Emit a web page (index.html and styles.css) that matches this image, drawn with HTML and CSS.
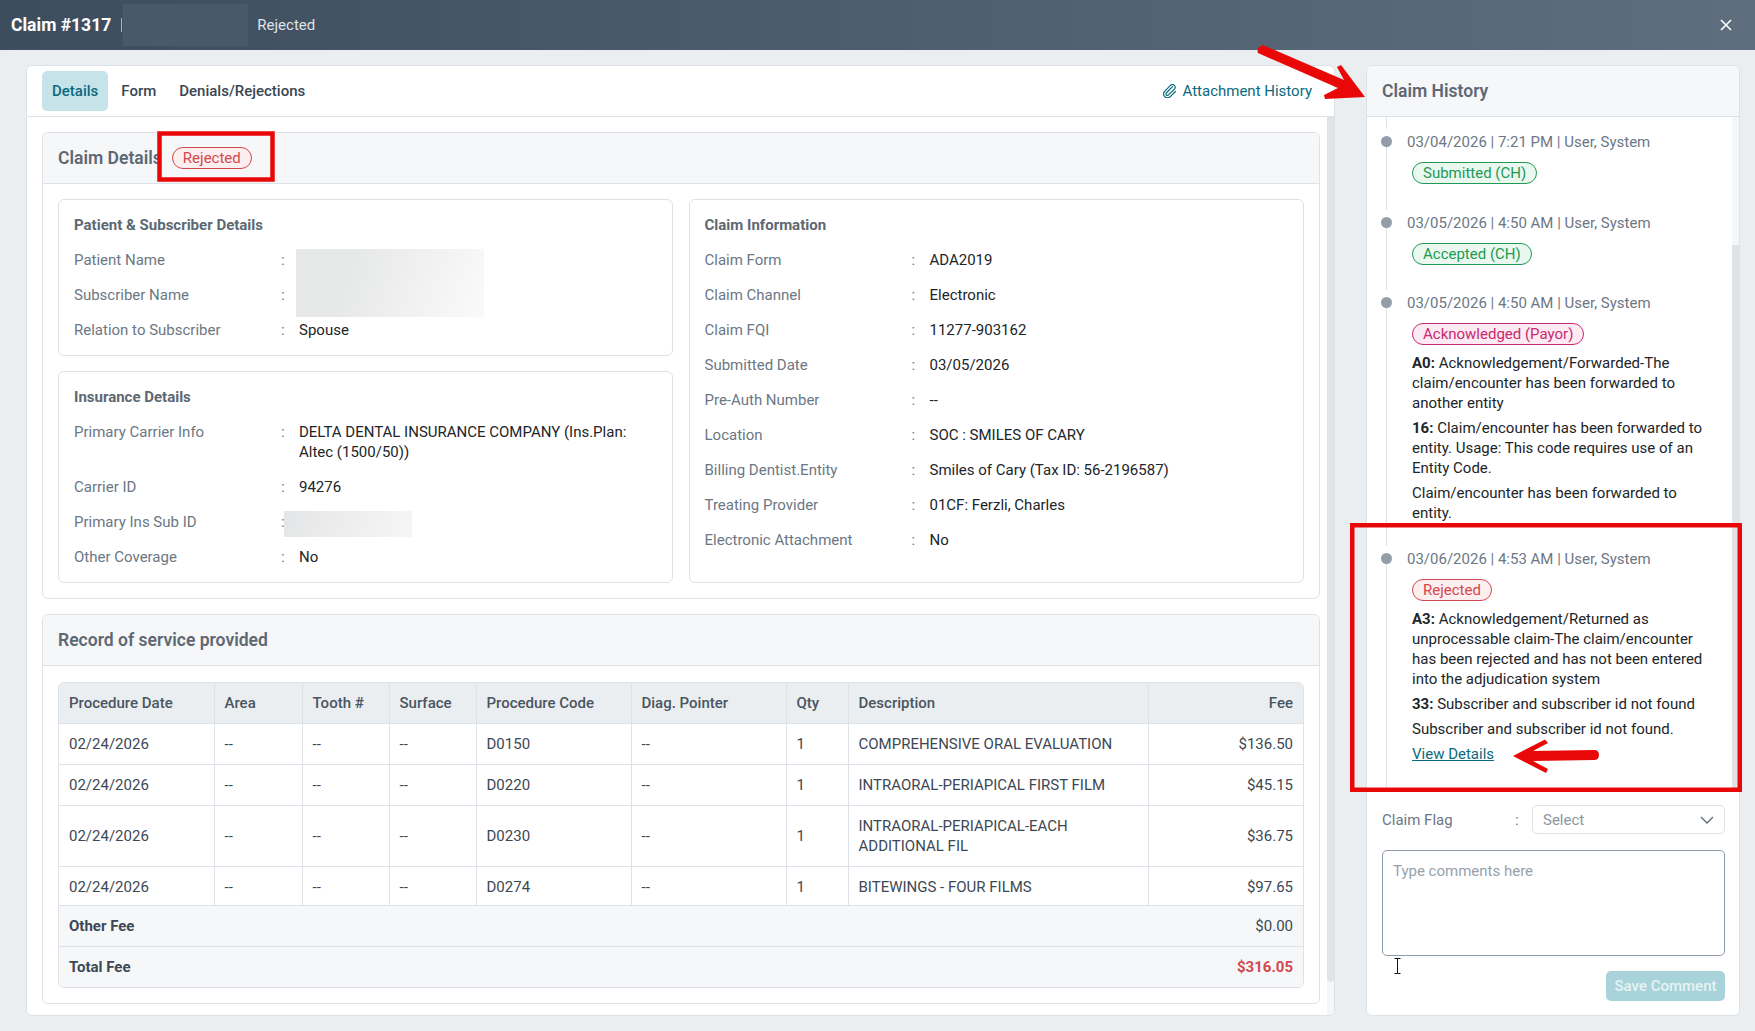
FILE: index.html
```html
<!DOCTYPE html>
<html lang="en">

<head>
  <meta charset="UTF-8">
  <meta name="viewport" content="width=device-width, initial-scale=1.0">
  <title>Claim #1317</title>
  <link rel="stylesheet" href="styles.css">
</head>

<body>
  <header class="topbar">
    <span class="topbar-title">Claim #1317</span>
    <span class="topbar-sep"></span>
    <span class="topbar-blur"></span>
    <span class="topbar-status">Rejected</span>
    <svg class="topbar-close" width="12" height="12" viewBox="0 0 12 12">
      <path d="M1 1L11 11M11 1L1 11" stroke="#fff" stroke-width="1.6" fill="none" />
    </svg>
  </header>

  <main class="layout">
    <section class="panel">
      <div class="tabs">
        <a class="tab tab-active">Details</a>
        <a class="tab">Form</a>
        <a class="tab">Denials/Rejections</a>
        <a class="attach-link">
          <svg width="14" height="14" viewBox="0 0 14 14">
            <path d="M9.6 2.6L3.2 9a1.5 1.5 0 0 0 2.1 2.1L11.5 5a2.7 2.7 0 0 0-3.8-3.8L1.6 7.3a3.9 3.9 0 0 0 5.500 5.500l5.300-5.300" stroke="#0b6a7e" stroke-width="1.2" fill="none" stroke-linecap="round" />
          </svg>
          Attachment History
        </a>
      </div>

      <div class="panel-body">
        <div class="panel-content">
          <div class="card">
            <div class="card-head">Claim Details <span class="badge badge-red">Rejected</span></div>
            <div class="card-body details-grid">
              <div class="details-col">
                <div class="box">
                  <div class="box-title">Patient &amp; Subscriber Details</div>
                  <div class="kv"><span class="kv-label">Patient Name</span><span class="kv-colon">:</span><span class="kv-val"></span><span class="blur blur-name"></span></div>
                  <div class="kv"><span class="kv-label">Subscriber Name</span><span class="kv-colon">:</span><span class="kv-val"></span></div>
                  <div class="kv"><span class="kv-label">Relation to Subscriber</span><span class="kv-colon">:</span><span class="kv-val">Spouse</span></div>
                </div>
                <div class="box">
                  <div class="box-title">Insurance Details</div>
                  <div class="kv"><span class="kv-label">Primary Carrier Info</span><span class="kv-colon">:</span><span class="kv-val">DELTA DENTAL INSURANCE COMPANY (Ins.Plan: Altec (1500/50))</span></div>
                  <div class="kv"><span class="kv-label">Carrier ID</span><span class="kv-colon">:</span><span class="kv-val">94276</span></div>
                  <div class="kv"><span class="kv-label">Primary Ins Sub ID</span><span class="kv-colon">:</span><span class="kv-val"></span><span class="blur blur-id"></span></div>
                  <div class="kv"><span class="kv-label">Other Coverage</span><span class="kv-colon">:</span><span class="kv-val">No</span></div>
                </div>
              </div>
              <div class="box">
                <div class="box-title">Claim Information</div>
                <div class="kv"><span class="kv-label">Claim Form</span><span class="kv-colon">:</span><span class="kv-val">ADA2019</span></div>
                <div class="kv"><span class="kv-label">Claim Channel</span><span class="kv-colon">:</span><span class="kv-val">Electronic</span></div>
                <div class="kv"><span class="kv-label">Claim FQI</span><span class="kv-colon">:</span><span class="kv-val">11277-903162</span></div>
                <div class="kv"><span class="kv-label">Submitted Date</span><span class="kv-colon">:</span><span class="kv-val">03/05/2026</span></div>
                <div class="kv"><span class="kv-label">Pre-Auth Number</span><span class="kv-colon">:</span><span class="kv-val">--</span></div>
                <div class="kv"><span class="kv-label">Location</span><span class="kv-colon">:</span><span class="kv-val">SOC : SMILES OF CARY</span></div>
                <div class="kv"><span class="kv-label">Billing Dentist.Entity</span><span class="kv-colon">:</span><span class="kv-val">Smiles of Cary (Tax ID: 56-2196587)</span></div>
                <div class="kv"><span class="kv-label">Treating Provider</span><span class="kv-colon">:</span><span class="kv-val">01CF: Ferzli, Charles</span></div>
                <div class="kv"><span class="kv-label">Electronic Attachment</span><span class="kv-colon">:</span><span class="kv-val">No</span></div>
              </div>
            </div>
          </div>

          <div class="card">
            <div class="card-head">Record of service provided</div>
            <div class="card-body card-body-table">
              <div class="table-wrap">
                <table class="svc">
                  <colgroup>
                    <col class="c-date">
                    <col class="c-area">
                    <col class="c-tooth">
                    <col class="c-surface">
                    <col class="c-code">
                    <col class="c-diag">
                    <col class="c-qty">
                    <col class="c-desc">
                    <col class="c-fee">
                  </colgroup>
                  <thead>
                    <tr>
                      <th>Procedure Date</th>
                      <th>Area</th>
                      <th>Tooth #</th>
                      <th>Surface</th>
                      <th>Procedure Code</th>
                      <th>Diag. Pointer</th>
                      <th>Qty</th>
                      <th>Description</th>
                      <th class="num">Fee</th>
                    </tr>
                  </thead>
                  <tbody>
                    <tr class="r41">
                      <td>02/24/2026</td><td>--</td><td>--</td><td>--</td><td>D0150</td><td>--</td><td>1</td>
                      <td>COMPREHENSIVE ORAL EVALUATION</td><td class="num">$136.50</td>
                    </tr>
                    <tr class="r41">
                      <td>02/24/2026</td><td>--</td><td>--</td><td>--</td><td>D0220</td><td>--</td><td>1</td>
                      <td>INTRAORAL-PERIAPICAL FIRST FILM</td><td class="num">$45.15</td>
                    </tr>
                    <tr class="r61">
                      <td>02/24/2026</td><td>--</td><td>--</td><td>--</td><td>D0230</td><td>--</td><td>1</td>
                      <td>INTRAORAL-PERIAPICAL-EACH ADDITIONAL FIL</td><td class="num">$36.75</td>
                    </tr>
                    <tr class="r39">
                      <td>02/24/2026</td><td>--</td><td>--</td><td>--</td><td>D0274</td><td>--</td><td>1</td>
                      <td>BITEWINGS - FOUR FILMS</td><td class="num">$97.65</td>
                    </tr>
                    <tr class="r41 total">
                      <td colspan="8"><b>Other Fee</b></td><td class="num">$0.00</td>
                    </tr>
                    <tr class="r41 total">
                      <td colspan="8"><b>Total Fee</b></td><td class="num fee-red">$316.05</td>
                    </tr>
                  </tbody>
                </table>
              </div>
            </div>
          </div>
        </div>
        <div class="scroll-track"><div class="scroll-thumb thumb-main"></div></div>
      </div>
    </section>

    <aside class="panel">
      <div class="history-head">Claim History</div>
      <div class="history-scroll">
        <div class="timeline">
          <div class="tl-item">
            <div class="tl-date">03/04/2026 | 7:21 PM | User, System</div>
            <div class="tl-body"><span class="badge badge-green">Submitted (CH)</span></div>
          </div>
          <div class="tl-item">
            <div class="tl-date">03/05/2026 | 4:50 AM | User, System</div>
            <div class="tl-body"><span class="badge badge-green">Accepted (CH)</span></div>
          </div>
          <div class="tl-item tl-long">
            <div class="tl-date">03/05/2026 | 4:50 AM | User, System</div>
            <div class="tl-body">
              <span class="badge badge-pink">Acknowledged (Payor)</span>
              <p><b>A0:</b> Acknowledgement/Forwarded-The claim/encounter has been forwarded to another entity</p>
              <p><b>16:</b> Claim/encounter has been forwarded to entity. Usage: This code requires use of an Entity Code.</p>
              <p>Claim/encounter has been forwarded to entity.</p>
            </div>
          </div>
          <div class="tl-item tl-long">
            <div class="tl-date">03/06/2026 | 4:53 AM | User, System</div>
            <div class="tl-body">
              <span class="badge badge-red">Rejected</span>
              <p><b>A3:</b> Acknowledgement/Returned as unprocessable claim-The claim/encounter has been rejected and has not been entered into the adjudication system</p>
              <p><b>33:</b> Subscriber and subscriber id not found</p>
              <p>Subscriber and subscriber id not found.</p>
              <p><a class="view-link">View Details</a></p>
            </div>
          </div>
        </div>
        <div class="scroll-track"><div class="scroll-thumb thumb-history"></div></div>
      </div>

      <div class="comment-form">
        <div class="flag-row">
          <span class="kv-label">Claim Flag</span>
          <span class="kv-colon">:</span>
          <div class="select">
            Select
            <svg width="14" height="8" viewBox="0 0 14 8">
              <path d="M1 1l6 6 6-6" stroke="#5d6873" stroke-width="1.3" fill="none" />
            </svg>
          </div>
        </div>
        <textarea class="comment-box" placeholder="Type comments here"></textarea>
        <div class="form-actions"><button class="btn-save">Save Comment</button></div>
      </div>
    </aside>
  </main>

  <!-- red marks drawn on top of the screenshot, plus the text cursor -->
  <svg class="marks" width="1755" height="1031" viewBox="0 0 1755 1031">
    <rect x="159.500" y="133.500" width="113" height="46" fill="none" stroke="#e90808" stroke-width="4.500" />
    <rect x="1352.250" y="525.250" width="387.500" height="264.500" fill="none" stroke="#e90808" stroke-width="4.500" />
    <path d="M1263 45L1344 80L1337 67L1341 65L1365 97L1325 99L1324 95L1338 88L1258 53Q1256 47 1263 45Z" fill="#e90808" />
    <path d="M1513 756L1545 739.500L1548 743L1533 751L1594 750Q1599 750 1599 755Q1599 760 1594 760L1533 761L1548 769L1546 773Z" fill="#e90808" />
    <path d="M1394.500 958.500H1397.500V973.500H1394.500M1400.500 958.500H1397.500M1400.500 973.500H1397.500" stroke="#111" stroke-width="1" fill="none" />
  </svg>
</body>

</html>
```

FILE: styles.css
```css
* {
  box-sizing: border-box;
}

html,
body {
  margin: 0;
  height: 1031px;
  overflow: hidden;
}

body {
  position: relative;
  background: #ebeef1;
  color: #212529;
  font-family: Roboto, "Liberation Sans", sans-serif;
  font-size: 15px;
  line-height: 20px;
}

.topbar {
  display: flex;
  align-items: center;
  height: 50px;
  padding: 0 23px 0 11px;
  color: #fff;
  background: linear-gradient(90deg, #3d4d5e, #5f6e7e);
}

.topbar-title {
  font-size: 17.550px;
  font-weight: 700;
}

.topbar-sep {
  width: 1px;
  height: 14px;
  margin: 0 1px 0 10px;
  background: #aab3bc;
}

.topbar-blur {
  width: 125px;
  height: 42px;
  background: #48596a;
}

.topbar-status {
  margin-left: 9px;
  color: #dfe3e7;
}

.topbar-close {
  margin-left: auto;
}

.layout {
  display: grid;
  grid-template-columns: 1309px 374px;
  gap: 31px;
  height: 981px;
  margin: 15px 15px 0 26px;
}

.panel {
  display: flex;
  flex-direction: column;
  height: 951px;
  overflow: hidden;
  background: #fff;
  border: 1px solid #dde1e8;
  border-radius: 6px;
}

.tabs {
  display: flex;
  align-items: center;
  flex-shrink: 0;
  height: 51px;
  padding: 0 22px 0 15px;
  border-bottom: 1px solid #dde1e8;
}

.tab {
  display: flex;
  align-items: center;
  height: 40px;
  margin-right: 3px;
  padding: 0 10px;
  color: #3a4653;
  font-weight: 500;
  border-radius: 5px;
}

.tab-active {
  color: #0b6a7e;
  background: #c5e3e8;
}

.attach-link {
  display: flex;
  align-items: center;
  gap: 6px;
  margin-left: auto;
  color: #0b6a7e;
}

.panel-body {
  display: flex;
  flex: 1;
  min-height: 0;
}

.panel-content {
  display: flex;
  flex: 1;
  flex-direction: column;
  gap: 15px;
  padding: 15px 7px 0 15px;
}

.scroll-track {
  flex-shrink: 0;
  width: 7px;
  background: #f5f6f8;
}

.scroll-thumb {
  width: 7px;
  background: #e0e4e7;
  border-radius: 0 0 4px 4px;
}

.thumb-main {
  height: 865px;
}

.thumb-history {
  height: 547px;
  margin-top: 128px;
}

.card {
  border: 1px solid #dde1e8;
  border-radius: 6px;
}

.card-head {
  display: flex;
  align-items: center;
  gap: 10px;
  height: 51px;
  padding: 0 15px;
  color: #5d6873;
  font-size: 17.550px;
  font-weight: 600;
  background: #f6f7f9;
  border-bottom: 1px solid #dde1e8;
  border-radius: 6px 6px 0 0;
}

.card-body {
  padding: 15px;
}

.card-body-table {
  padding-top: 16px;
}

.details-grid {
  display: grid;
  grid-template-columns: 615px 615.500px;
  gap: 15.500px;
}

.details-col {
  display: flex;
  flex-direction: column;
  gap: 15px;
}

.box {
  padding: 15px 15px 8px;
  border: 1px solid #dde1e8;
  border-radius: 6px;
}

.box-title {
  margin-bottom: 7px;
  color: #5d6873;
  font-weight: 700;
}

.kv {
  position: relative;
  display: grid;
  grid-template-columns: 207px 18px 1fr;
  padding: 7.500px 0;
}

.kv-label {
  color: #6c7784;
}

.kv-colon {
  color: #6c7784;
}

.blur {
  position: absolute;
  top: 7px;
}

.blur-name {
  left: 222px;
  width: 188px;
  height: 68px;
  background: linear-gradient(110deg, #e7e8e8 30%, #f9f9f9 95%);
}

.blur-id {
  left: 210px;
  width: 128px;
  height: 26px;
  background: linear-gradient(110deg, #e4e5e6, #f6f6f6);
}

.badge {
  display: flex;
  align-items: center;
  width: fit-content;
  height: 22px;
  padding: 0 10px;
  font-size: 15px;
  font-weight: 400;
  border: 1px solid;
  border-radius: 11px;
}

.badge-red {
  color: #d2484f;
  background: #fdeeef;
  border-color: #d2484f;
}

.badge-green {
  color: #1f9a54;
  background: #eaf8f0;
  border-color: #1f9a54;
}

.badge-pink {
  color: #c9296f;
  background: #fdeaf3;
  border-color: #c9296f;
}

.table-wrap {
  overflow: hidden;
  border: 1px solid #dde1e8;
  border-radius: 6px;
}

.svc {
  width: 100%;
  table-layout: fixed;
  border-collapse: collapse;
  color: #3d4854;
}

.c-date { width: 155px; }
.c-area { width: 88px; }
.c-tooth { width: 87px; }
.c-surface { width: 87px; }
.c-code { width: 155px; }
.c-diag { width: 155px; }
.c-qty { width: 62px; }
.c-desc { width: 300px; }
.c-fee { width: 155px; }

.svc th,
.svc td {
  padding: 0 10px;
  text-align: left;
  border-right: 1px solid #dde1e8;
  border-bottom: 1px solid #dde1e8;
}

.svc th:last-child,
.svc td:last-child {
  border-right: none;
}

.svc tr:last-child td {
  border-bottom: none;
}

.svc th {
  height: 40px;
  color: #4a5562;
  font-weight: 500;
  background: #ebeef1;
}

.r41 { height: 41px; }
.r61 { height: 61px; }
.r39 { height: 39px; }

.svc .r39 td {
  padding-top: 2px;
}

.svc .num {
  text-align: right;
}

.svc .total td {
  background: #f6f7f9;
  border-right: none;
}

.fee-red {
  color: #d2484f;
  font-weight: 700;
}

.history-head {
  display: flex;
  align-items: center;
  flex-shrink: 0;
  height: 51px;
  padding: 0 15px;
  color: #5d6873;
  font-size: 17.550px;
  font-weight: 600;
  background: #f6f7f9;
  border-bottom: 1px solid #dde1e8;
}

.history-scroll {
  display: flex;
  flex-shrink: 0;
  height: 675px;
  overflow: hidden;
}

.timeline {
  flex: 1;
  padding-top: 15px;
}

.timeline::before {
  content: "";
  display: block;
  width: 1px;
  height: 12px;
  margin: -15px 0 3px 19px;
  background: #dde1e8;
}

.tl-item {
  position: relative;
  padding: 0 23px 20.500px 40px;
}

.tl-item::before {
  content: "";
  position: absolute;
  left: 14px;
  top: 4px;
  width: 11px;
  height: 11px;
  background: #939daa;
  border-radius: 50%;
}

.tl-item::after {
  content: "";
  position: absolute;
  left: 19px;
  top: 15px;
  bottom: 3px;
  width: 1px;
  background: #dde1e8;
}

.tl-long {
  padding-bottom: 21px;
}

.tl-date {
  color: #6c7784;
}

.tl-body {
  margin-top: 10px;
  margin-left: 5px;
}

.tl-body .badge {
  margin-bottom: 8px;
}

.tl-body p {
  margin: 0 0 5px;
}

.view-link {
  color: #0b6a7e;
  text-decoration: underline;
}

.comment-form {
  padding: 13px 14px 0 15px;
}

.flag-row {
  display: grid;
  grid-template-columns: 133px 17px 193px;
  align-items: center;
}

.select {
  display: flex;
  align-items: center;
  justify-content: space-between;
  height: 29px;
  padding: 0 10px;
  color: #8c96a1;
  border: 1px solid #dde1e8;
  border-radius: 5px;
}

.comment-box {
  display: block;
  width: 343px;
  height: 106px;
  margin-top: 16px;
  padding: 10px;
  font-family: inherit;
  font-size: 15px;
  line-height: 20px;
  border: 1px solid #8f9ba8;
  border-radius: 5px;
  resize: none;
  outline: none;
}

.comment-box::placeholder {
  color: #98a1ab;
}

.form-actions {
  display: flex;
  justify-content: flex-end;
  width: 343px;
  margin-top: 15px;
}

.btn-save {
  width: 119px;
  height: 30px;
  padding: 0;
  color: #e6f3f5;
  font-family: inherit;
  font-size: 15px;
  font-weight: 500;
  background: #a8d3da;
  border: none;
  border-radius: 5px;
}

.marks {
  position: absolute;
  left: 0;
  top: 0;
  pointer-events: none;
}
```
